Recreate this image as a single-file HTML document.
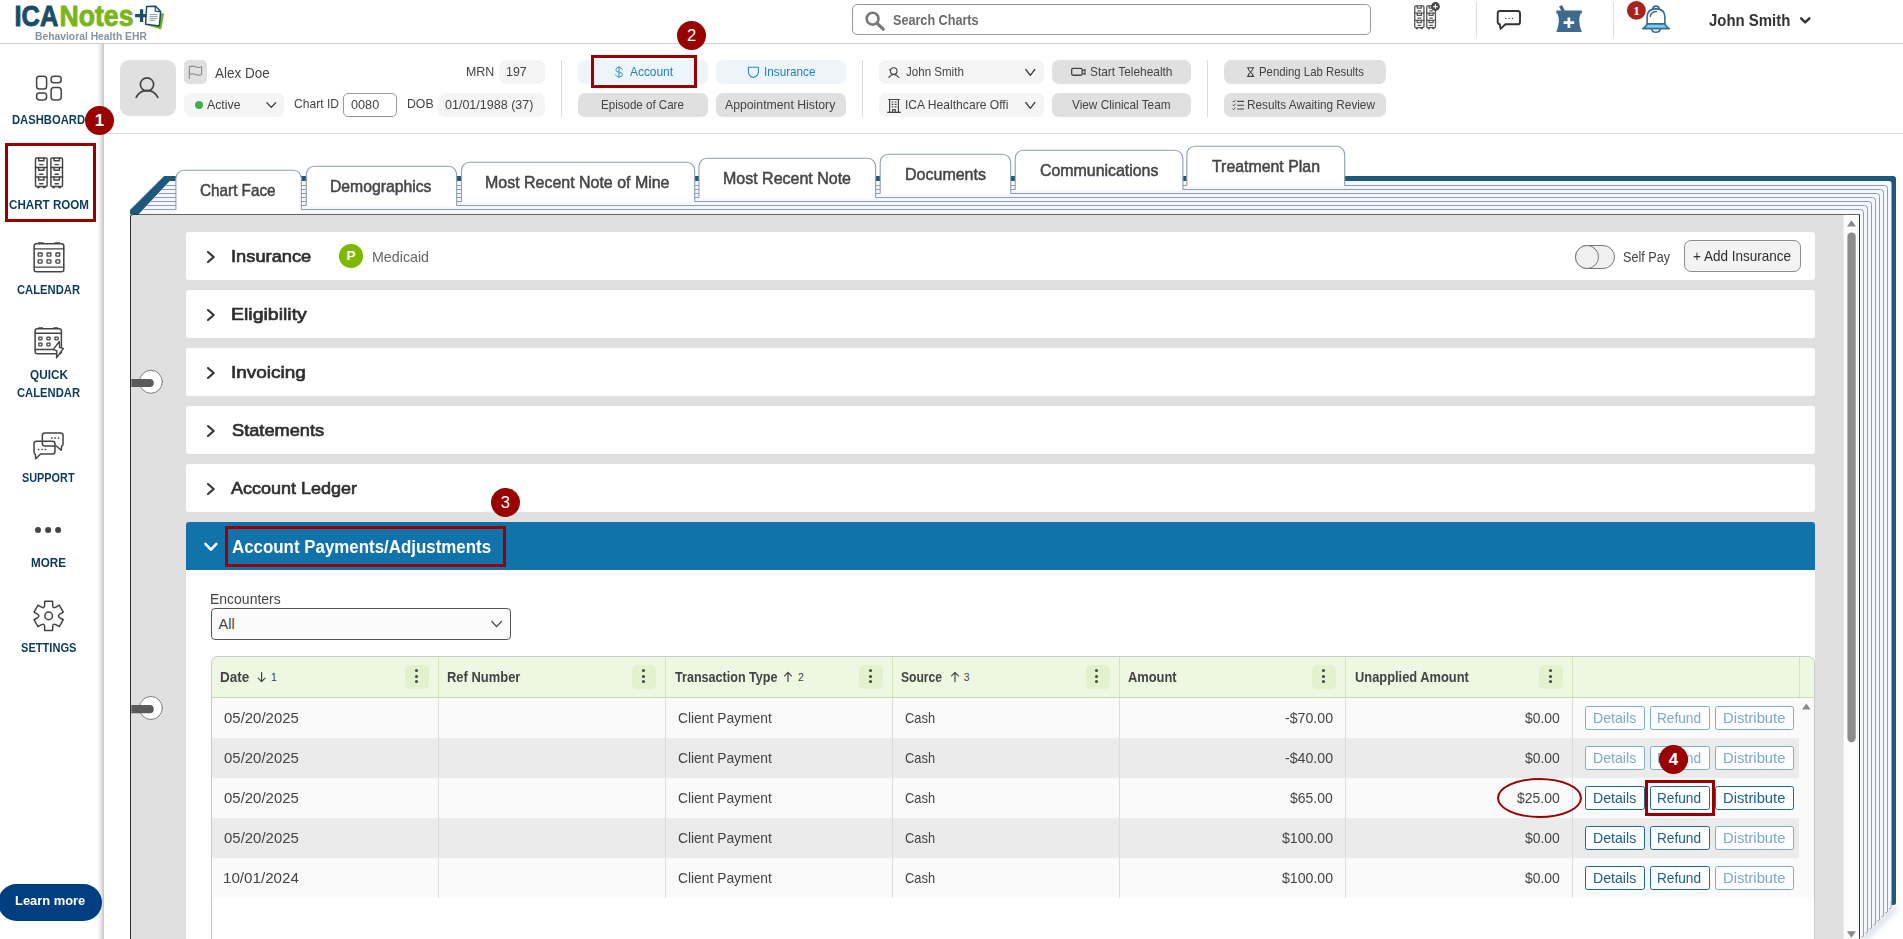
<!DOCTYPE html>
<html lang="en">
<head>
<meta charset="utf-8">
<title>ICANotes - Chart Room</title>
<style>
html,body{margin:0;padding:0;}
html{width:1903px;height:939px;overflow:hidden;}
body{width:1903px;height:939px;overflow:hidden;position:relative;background:#fff;font-family:"Liberation Sans",sans-serif;}
.abs,.t,.box{position:absolute;}
.t{white-space:nowrap;line-height:24px;height:24px;z-index:5;transform-origin:0 50%;}
.box{box-sizing:border-box;}
#header{left:0;top:0;width:1903px;height:44px;background:#fff;border-bottom:1px solid #cfcfcf;}
#sidebar{left:0;top:44px;width:104px;height:895px;background:linear-gradient(90deg,#fff 0,#fff 97px,#f3f3f3 99px,#e2e2e2 101.5px,#c9c9c9 103.6px,#fff 103.7px);}
#pbar{left:104px;top:44px;width:1799px;height:90px;background:#fff;border-bottom:1px solid #dcdcdc;}
.vsep{position:absolute;width:1px;background:#dcdcdc;}
.pill{position:absolute;box-sizing:border-box;border-radius:7px;height:24px;}
.pl{background:#f5f5f5;}
.pg{background:#e0e0e0;}
.pb{background:#edf5fb;}
#content{left:130px;top:214px;width:1730px;height:725px;background:#e0e0e0;border:1px solid #303030;border-bottom:0;border-radius:3px 0 0 0;}
.card{position:absolute;left:186px;width:1629px;height:48px;background:#fff;border-radius:3px;}
#sechead{position:absolute;left:186px;top:522px;width:1629px;height:48px;background:#1273ab;border-radius:3px 3px 0 0;}
#secbody{position:absolute;left:186px;top:570px;width:1629px;height:369px;background:#fff;}
#grid{position:absolute;left:211px;top:656px;width:1604px;height:283px;box-sizing:border-box;border:1px solid #c9c9c9;border-bottom:0;border-radius:7px 7px 0 0;background:#fff;overflow:hidden;}
#ghead{position:absolute;left:0;top:0;width:1604px;height:40px;background:#eef7e2;border-bottom:1px solid #c3dfa4;}
.gsep{position:absolute;top:0;width:1px;height:40px;background:#cfe6b6;}
.rsep{position:absolute;top:41px;width:1px;height:200px;background:#dcdcdc;}
.row{position:absolute;left:0;width:1587px;height:40px;}
.ro{background:#fafafa;}
.re{background:#ebebeb;}
.kebab{position:absolute;top:8px;width:24px;height:24px;border-radius:5px;background:#e1f2cd;}
.kebab i{position:absolute;left:9.6px;width:3px;height:3px;border-radius:50%;background:#444;}
.btn{position:absolute;box-sizing:border-box;height:24px;border:1px solid #1a6a9c;border-radius:2.5px;background:#fff;}
.btn.d{border-color:#82adc7;background:#fcfdfe;}
.badge{position:absolute;width:29.4px;height:29.4px;border-radius:50%;background:#990000;color:#fff;text-align:center;line-height:29.4px;font-size:16.6px;z-index:9;}
.hl{position:absolute;box-sizing:border-box;border:3px solid #990000;z-index:8;}
svg{position:absolute;left:0;top:0;overflow:hidden;}
</style>
</head>
<body>

<!-- ============ top header ============ -->
<div id="header" class="box"></div>
<div class="box" style="left:852px;top:4px;width:519px;height:31px;border:1px solid #9a9a9a;border-radius:5px;background:#fff;"></div>
<div class="vsep" style="left:1476px;top:2px;height:35px;"></div>
<div class="vsep" style="left:1613px;top:2px;height:35px;"></div>

<!-- ============ sidebar ============ -->
<div id="sidebar" class="box"></div>
<div class="box" style="left:-2px;top:883.8px;width:104.2px;height:37.2px;border-radius:18.6px;background:#003e82;z-index:4;"></div>

<!-- ============ patient bar ============ -->
<div id="pbar" class="box"></div>
<div class="box" style="left:120px;top:60px;width:56px;height:56px;border-radius:9px;background:#e0e0e0;"></div>
<div class="box" style="left:184px;top:60px;width:23px;height:24px;border-radius:5px;background:#e0e0e0;"></div>
<div class="pill pl" style="left:184px;top:93px;width:100px;"></div>
<div class="abs" style="left:195px;top:101px;width:8px;height:8px;border-radius:50%;background:#3cb14a;"></div>
<div class="box" style="left:343px;top:93px;width:54px;height:24px;border:1px solid #9a9a9a;border-radius:5px;background:#fff;"></div>
<div class="pill pl" style="left:438px;top:93px;width:107px;"></div>
<div class="pill pl" style="left:499px;top:60px;width:46px;"></div>
<div class="vsep" style="left:561px;top:60px;height:57px;"></div>
<div class="pill pb" style="left:578px;top:60px;width:130px;"></div>
<div class="pill pb" style="left:716px;top:60px;width:130px;"></div>
<div class="pill pg" style="left:578px;top:93px;width:130px;"></div>
<div class="pill pg" style="left:716px;top:93px;width:130px;"></div>
<div class="vsep" style="left:862px;top:60px;height:57px;"></div>
<div class="pill pl" style="left:879px;top:60px;width:165px;"></div>
<div class="pill pl" style="left:879px;top:93px;width:165px;"></div>
<div class="pill pg" style="left:1052px;top:60px;width:139px;"></div>
<div class="pill pg" style="left:1052px;top:93px;width:139px;"></div>
<div class="vsep" style="left:1207px;top:60px;height:57px;"></div>
<div class="pill pg" style="left:1224px;top:60px;width:162px;"></div>
<div class="pill pg" style="left:1224px;top:93px;width:162px;"></div>

<!-- ============ book frame (svg) ============ -->
<svg width="1903" height="939" viewBox="0 0 1903 939" style="z-index:1;pointer-events:none">
<defs><filter id="blr" x="-50%" y="-50%" width="200%" height="200%"><feGaussianBlur stdDeviation="2.6"/></filter></defs>
<path d="M1861,940 L1861,937 L1893,905 L1897,906 L1897,911 L1868,940 Z" fill="#a9b9cf" opacity=".36" filter="url(#blr)"/>
<path d="M138.6,214.2 L169.7,180.9 H1891.5 V906.85 Q1891.5,908.85 1889.5,908.85 H1887.5 V910.90 Q1887.5,912.90 1885.5,912.90 H1883.5 V914.95 Q1883.5,916.95 1881.5,916.95 H1879.5 V919.00 Q1879.5,921.00 1877.5,921.00 H1875.5 V923.05 Q1875.5,925.05 1873.5,925.05 H1871.5 V927.10 Q1871.5,929.10 1869.5,929.10 H1867.5 V931.15 Q1867.5,933.15 1865.5,933.15 H1863.5 V935.20 Q1863.5,937.20 1861.5,937.20 H1860.0 V214.2 Z" fill="#f4f7fc"/>
<path d="M130,216 V209.9 L164.1,176.1 H1893 Q1896,176.1 1896,179.1 V902.4 Q1896,904.9 1893.5,904.9 H1891.5 V183.4 Q1891.5,180.9 1889,180.9 H169.7 L138.6,214.2 H130 Z" fill="#1c597b"/>
<path d="M143.6,209.5 H1860.5 Q1863.5,209.5 1863.5,212.5 V935.20 Q1863.5,937.20 1861.3,937.20" fill="none" stroke="#919eb0" stroke-width="1"/>
<path d="M147.3,205.5 H1864.5 Q1867.5,205.5 1867.5,208.5 V931.15 Q1867.5,933.15 1865.3,933.15" fill="none" stroke="#919eb0" stroke-width="1"/>
<path d="M151.1,201.5 H1868.5 Q1871.5,201.5 1871.5,204.5 V927.10 Q1871.5,929.10 1869.3,929.10" fill="none" stroke="#919eb0" stroke-width="1"/>
<path d="M154.8,197.5 H1872.5 Q1875.5,197.5 1875.5,200.5 V923.05 Q1875.5,925.05 1873.3,925.05" fill="none" stroke="#919eb0" stroke-width="1"/>
<path d="M158.5,193.5 H1876.5 Q1879.5,193.5 1879.5,196.5 V919.00 Q1879.5,921.00 1877.3,921.00" fill="none" stroke="#919eb0" stroke-width="1"/>
<path d="M162.3,189.5 H1880.5 Q1883.5,189.5 1883.5,192.5 V914.95 Q1883.5,916.95 1881.3,916.95" fill="none" stroke="#919eb0" stroke-width="1"/>
<path d="M166.0,185.5 H1884.5 Q1887.5,185.5 1887.5,188.5 V910.90 Q1887.5,912.90 1885.3,912.90" fill="none" stroke="#919eb0" stroke-width="1"/>
<path d="M1891.2,900.85 V906.85 Q1891.2,908.85 1889,908.85" fill="none" stroke="#919eb0" stroke-width=".9"/>
<path d="M175.9,213.9 V178.3 A8,8 0 0 1 183.9,170.3 H293.4 A8,8 0 0 1 301.4,178.3 V213.9 Z" fill="#fff"/>
<path d="M175.9,209.7 V178.3 A8,8 0 0 1 183.9,170.3 H293.4 A8,8 0 0 1 301.4,178.3 V209.7" fill="none" stroke="#919eb0" stroke-width="1.1"/>
<path d="M306.3,206.1 V174.3 A8,8 0 0 1 314.3,166.3 H448.6 A8,8 0 0 1 456.6,174.3 V206.1 Z" fill="#fff"/>
<path d="M306.3,205.7 V174.3 A8,8 0 0 1 314.3,166.3 H448.6 A8,8 0 0 1 456.6,174.3 V205.7" fill="none" stroke="#919eb0" stroke-width="1.1"/>
<path d="M461.5,202.1 V170.3 A8,8 0 0 1 469.5,162.3 H686.7 A8,8 0 0 1 694.7,170.3 V202.1 Z" fill="#fff"/>
<path d="M461.5,201.7 V170.3 A8,8 0 0 1 469.5,162.3 H686.7 A8,8 0 0 1 694.7,170.3 V201.7" fill="none" stroke="#919eb0" stroke-width="1.1"/>
<path d="M699.0,198.1 V166.3 A8,8 0 0 1 707.0,158.3 H867.6 A8,8 0 0 1 875.6,166.3 V198.1 Z" fill="#fff"/>
<path d="M699.0,197.7 V166.3 A8,8 0 0 1 707.0,158.3 H867.6 A8,8 0 0 1 875.6,166.3 V197.7" fill="none" stroke="#919eb0" stroke-width="1.1"/>
<path d="M880.2,194.1 V162.3 A8,8 0 0 1 888.2,154.3 H1002.7 A8,8 0 0 1 1010.7,162.3 V194.1 Z" fill="#fff"/>
<path d="M880.2,193.7 V162.3 A8,8 0 0 1 888.2,154.3 H1002.7 A8,8 0 0 1 1010.7,162.3 V193.7" fill="none" stroke="#919eb0" stroke-width="1.1"/>
<path d="M1015.2,190.1 V158.3 A8,8 0 0 1 1023.2,150.3 H1174.9 A8,8 0 0 1 1182.9,158.3 V190.1 Z" fill="#fff"/>
<path d="M1015.2,189.7 V158.3 A8,8 0 0 1 1023.2,150.3 H1174.9 A8,8 0 0 1 1182.9,158.3 V189.7" fill="none" stroke="#919eb0" stroke-width="1.1"/>
<path d="M1186.8,186.1 V154.3 A8,8 0 0 1 1194.8,146.3 H1336.7 A8,8 0 0 1 1344.7,154.3 V186.1 Z" fill="#fff"/>
<path d="M1186.8,185.7 V154.3 A8,8 0 0 1 1194.8,146.3 H1336.7 A8,8 0 0 1 1344.7,154.3 V185.7" fill="none" stroke="#919eb0" stroke-width="1.1"/>
</svg>

<!-- ============ content panel ============ -->
<div id="content" class="box"></div>
<div class="card" style="top:232px;"></div>
<div class="card" style="top:290px;"></div>
<div class="card" style="top:348px;"></div>
<div class="card" style="top:406px;"></div>
<div class="card" style="top:464px;"></div>
<div id="sechead"></div>
<div id="secbody"></div>

<!-- insurance card widgets -->
<div class="abs" style="left:339.3px;top:244.4px;width:23.5px;height:23.5px;border-radius:50%;background:#7cba01;color:#fff;font-weight:700;font-size:13.5px;line-height:23.5px;text-align:center;">P</div>
<div class="box" style="left:1575px;top:245px;width:40px;height:24px;border:1px solid #777;border-radius:12px;background:#f0f0f0;"></div>
<div class="box" style="left:1575px;top:245px;width:24px;height:24px;border:1px solid #777;border-radius:12px;background:#f0f0f0;"></div>
<div class="box" style="left:1684px;top:240px;width:117px;height:32px;border:1px solid #8c8c8c;border-radius:7px;background:#f3f3f3;"></div>

<!-- encounters select -->
<div class="box" style="left:211px;top:608px;width:300px;height:32px;border:1px solid #555;border-radius:4px;background:#fbfbfb;"></div>

<!-- grid -->
<div id="grid">
  <div id="ghead"></div>
  <div class="gsep" style="left:226px;"></div>
  <div class="gsep" style="left:453px;"></div>
  <div class="gsep" style="left:680px;"></div>
  <div class="gsep" style="left:906.6px;"></div>
  <div class="gsep" style="left:1133.4px;"></div>
  <div class="gsep" style="left:1360.2px;"></div>
  <div class="gsep" style="left:1586.5px;"></div>
  <div class="kebab" style="left:193px;"><i style="top:4.1px"></i><i style="top:9.6px"></i><i style="top:15.1px"></i></div>
  <div class="kebab" style="left:420px;"><i style="top:4.1px"></i><i style="top:9.6px"></i><i style="top:15.1px"></i></div>
  <div class="kebab" style="left:647px;"><i style="top:4.1px"></i><i style="top:9.6px"></i><i style="top:15.1px"></i></div>
  <div class="kebab" style="left:873.7px;"><i style="top:4.1px"></i><i style="top:9.6px"></i><i style="top:15.1px"></i></div>
  <div class="kebab" style="left:1100px;"><i style="top:4.1px"></i><i style="top:9.6px"></i><i style="top:15.1px"></i></div>
  <div class="kebab" style="left:1327px;"><i style="top:4.1px"></i><i style="top:9.6px"></i><i style="top:15.1px"></i></div>
  <div class="row ro" style="top:41px;"></div>
  <div class="row re" style="top:81px;"></div>
  <div class="row ro" style="top:121px;"></div>
  <div class="row re" style="top:161px;"></div>
  <div class="row ro" style="top:201px;"></div>
  <div class="abs" style="left:1587px;top:41px;width:16px;height:200px;background:#fafafa;"></div>
  <div class="rsep" style="left:226px;"></div>
  <div class="rsep" style="left:453px;"></div>
  <div class="rsep" style="left:680px;"></div>
  <div class="rsep" style="left:906.6px;"></div>
  <div class="rsep" style="left:1133.4px;"></div>
  <div class="rsep" style="left:1360.2px;"></div>
</div>
<div class="btn d" style="left:1585px;top:706px;width:60px;"></div>
<div class="btn d" style="left:1650px;top:706px;width:60px;"></div>
<div class="btn d" style="left:1715px;top:706px;width:79px;"></div>
<div class="btn d" style="left:1585px;top:746px;width:60px;"></div>
<div class="btn d" style="left:1650px;top:746px;width:60px;"></div>
<div class="btn d" style="left:1715px;top:746px;width:79px;"></div>
<div class="btn" style="left:1585px;top:786px;width:60px;"></div>
<div class="btn" style="left:1650px;top:786px;width:60px;"></div>
<div class="btn" style="left:1715px;top:786px;width:79px;"></div>
<div class="btn" style="left:1585px;top:826px;width:60px;"></div>
<div class="btn" style="left:1650px;top:826px;width:60px;"></div>
<div class="btn d" style="left:1715px;top:826px;width:79px;"></div>
<div class="btn" style="left:1585px;top:866px;width:60px;"></div>
<div class="btn" style="left:1650px;top:866px;width:60px;"></div>
<div class="btn d" style="left:1715px;top:866px;width:79px;"></div>

<!-- ============ icons (svg) ============ -->
<svg width="1903" height="939" viewBox="0 0 1903 939" style="z-index:3;pointer-events:none" fill="none" stroke-linecap="round" stroke-linejoin="round">
<g stroke="none">
<text x="14.5" y="26.2" font-family="Liberation Sans" font-weight="700" font-size="29.8" fill="#1b4d6b" stroke="#1b4d6b" stroke-width=".9" textLength="43.8" lengthAdjust="spacingAndGlyphs">ICA</text>
<text x="59.5" y="26.2" font-family="Liberation Sans" font-weight="700" font-size="29.8" fill="#7ab51d" stroke="#7ab51d" stroke-width=".9" textLength="74.0" lengthAdjust="spacingAndGlyphs">Notes</text>
<path d="M139.9,9.2h3.3v4.7h4.8v3.3h-4.8v4.8h-3.3v-4.8h-4.8v-3.3h4.8z" fill="#1b4d6b"/>
<path d="M151,12.2 L164.2,13.6 L161.2,29.6 L147.6,25.2 Z" fill="#7ab51d"/>
<path d="M146.6,6.6 L155.6,6.2 L160.6,11.4 L159.4,26 L145.6,24.2 Z" fill="#fff" stroke="#1b4d6b" stroke-width="1.5"/>
<path d="M155.4,6.4 L155.2,11.2 L160.2,11.6" fill="none" stroke="#1b4d6b" stroke-width="1.2"/>
<path d="M149.8,14.6h7.2M149.8,16.6h7.2M149.8,18.6h7.2M149.8,20.4h5" stroke="#7d93b5" stroke-width=".9"/>
</g>
<circle cx="872.6" cy="18.7" r="5.9" stroke="#787878" stroke-width="2.6"/>
<path d="M877.4,23.6 L883.2,29.2" stroke="#787878" stroke-width="3.2"/>
<rect x="35.50" y="157.90" width="11.60" height="28.70" rx="1.1" stroke="#444" stroke-width="1.45"/><path d="M35.50,167.47H47.10" stroke="#444" stroke-width="1.45"/><path d="M35.50,177.03H47.10" stroke="#444" stroke-width="1.45"/><path d="M38.63,157.90V160.77H43.97V157.90" stroke="#444" stroke-width="1.45"/><path d="M39.68,164.60H42.92" stroke="#444" stroke-width="1.45"/><path d="M38.63,167.47V170.34H43.97V167.47" stroke="#444" stroke-width="1.45"/><path d="M39.68,174.16H42.92" stroke="#444" stroke-width="1.45"/><path d="M38.63,177.03V179.90H43.97V177.03" stroke="#444" stroke-width="1.45"/><path d="M39.68,183.73H42.92" stroke="#444" stroke-width="1.45"/><path d="M37.47,187.60h1.62M43.50,187.60h1.62" stroke="#444" stroke-width="1.45"/>
<rect x="50.90" y="157.90" width="11.60" height="28.70" rx="1.1" stroke="#444" stroke-width="1.45"/><path d="M50.90,167.47H62.50" stroke="#444" stroke-width="1.45"/><path d="M50.90,177.03H62.50" stroke="#444" stroke-width="1.45"/><path d="M54.03,157.90V160.77H59.37V157.90" stroke="#444" stroke-width="1.45"/><path d="M55.08,164.60H58.32" stroke="#444" stroke-width="1.45"/><path d="M54.03,167.47V170.34H59.37V167.47" stroke="#444" stroke-width="1.45"/><path d="M55.08,174.16H58.32" stroke="#444" stroke-width="1.45"/><path d="M54.03,177.03V179.90H59.37V177.03" stroke="#444" stroke-width="1.45"/><path d="M55.08,183.73H58.32" stroke="#444" stroke-width="1.45"/><path d="M52.87,187.60h1.62M58.90,187.60h1.62" stroke="#444" stroke-width="1.45"/>
<rect x="1414.75" y="5.85" width="9.20" height="21.80" rx="1.1" stroke="#555" stroke-width="1.3"/><path d="M1414.75,13.12H1423.95" stroke="#555" stroke-width="1.3"/><path d="M1414.75,20.38H1423.95" stroke="#555" stroke-width="1.3"/><path d="M1417.23,5.85V8.03H1421.47V5.85" stroke="#555" stroke-width="1.3"/><path d="M1418.06,10.94H1420.64" stroke="#555" stroke-width="1.3"/><path d="M1417.23,13.12V15.30H1421.47V13.12" stroke="#555" stroke-width="1.3"/><path d="M1418.06,18.20H1420.64" stroke="#555" stroke-width="1.3"/><path d="M1417.23,20.38V22.56H1421.47V20.38" stroke="#555" stroke-width="1.3"/><path d="M1418.06,25.47H1420.64" stroke="#555" stroke-width="1.3"/><path d="M1416.31,28.65h1.29M1421.10,28.65h1.29" stroke="#555" stroke-width="1.3"/>
<rect x="1426.75" y="5.85" width="8.70" height="21.80" rx="1.1" stroke="#555" stroke-width="1.3"/><path d="M1426.75,13.12H1435.45" stroke="#555" stroke-width="1.3"/><path d="M1426.75,20.38H1435.45" stroke="#555" stroke-width="1.3"/><path d="M1429.10,5.85V8.03H1433.10V5.85" stroke="#555" stroke-width="1.3"/><path d="M1429.88,10.94H1432.32" stroke="#555" stroke-width="1.3"/><path d="M1429.10,13.12V15.30H1433.10V13.12" stroke="#555" stroke-width="1.3"/><path d="M1429.88,18.20H1432.32" stroke="#555" stroke-width="1.3"/><path d="M1429.10,20.38V22.56H1433.10V20.38" stroke="#555" stroke-width="1.3"/><path d="M1429.88,25.47H1432.32" stroke="#555" stroke-width="1.3"/><path d="M1428.23,28.65h1.22M1432.75,28.65h1.22" stroke="#555" stroke-width="1.3"/>
<circle cx="1435.45" cy="6.5" r="4.4" fill="#444" stroke="none"/>
<path d="M1433.15,6.5h4.6M1435.45,4.2v4.6" stroke="#fff" stroke-width="1.25" stroke-linecap="butt"/>
<path d="M1500.2,11 H1517.6 Q1520,11 1520,13.4 V21.9 Q1520,24.3 1517.6,24.3 H1505.4 L1500.6,28.9 L1499.8,24.3 Q1497.7,24.1 1497.7,21.9 V13.4 Q1497.7,11 1500.2,11 Z" stroke="#333" stroke-width="1.9"/>
<path d="M1505.9,18.4h.01M1509.2,18.4h.01M1512.5,18.4h.01" stroke="#333" stroke-width="1.3"/>
<path d="M1559.0,6.4 L1562.0,5.0 L1564.8,10.6 H1581.8 V13.6 H1580.6 Q1577.4,21.4 1581.8,32 H1556.3 Q1560.7,21.4 1557.5,13.6 H1556.3 V10.6 H1561.2 Z" fill="#3d6a8e" stroke="none"/>
<path d="M1563.6,22.7h10.6M1568.9,17.4v10.6" stroke="#fff" stroke-width="2.7" stroke-linecap="butt"/>
<path d="M1652.7,8.9 A3.35,3.35 0 0 1 1659.3,8.9" stroke="#3b6a8e" stroke-width="1.6"/>
<path d="M1647.1,23.9 V17.2 Q1647.1,8.9 1656,8.9 Q1664.9,8.9 1664.9,17.2 V23.9 Z" fill="#fff" stroke="#3b6a8e" stroke-width="1.6"/>
<path d="M1647.2,23.9 H1664.8 Q1666.2,27.2 1669.2,28.6 H1642.8 Q1645.8,27.2 1647.2,23.9 Z" fill="#70d0f6" stroke="#3b6a8e" stroke-width="1.6"/>
<path d="M1651.8,29.4 Q1652.3,32.3 1656,32.3 Q1659.7,32.3 1660.2,29.4" stroke="#3b6a8e" stroke-width="1.6"/>
<path d="M1650.3,16.4 Q1650.7,12.2 1656.3,11.6" stroke="#3b6a8e" stroke-width="1.5"/>
<circle cx="1636.4" cy="10.4" r="9.4" fill="#a9211d" stroke="none"/>
<text x="1636.4" y="14.9" font-family="Liberation Serif" font-weight="700" font-size="13" fill="#fff" stroke="none" text-anchor="middle">1</text>
<path d="M1801.1,18.3 L1805.2,22.4 L1809.3,18.3" stroke="#333" stroke-width="2.4"/>
<rect x="36.6" y="76.2" width="10.0" height="12.9" rx="2.8" stroke="#444" stroke-width="1.5"/>
<rect x="51.1" y="76.2" width="10.1" height="6.5" rx="2.8" stroke="#444" stroke-width="1.5"/>
<rect x="36.6" y="93.0" width="10.0" height="6.9" rx="2.8" stroke="#444" stroke-width="1.5"/>
<rect x="51.1" y="87.6" width="10.1" height="12.3" rx="2.8" stroke="#444" stroke-width="1.5"/>
<rect x="34.15" y="243.65" width="29.65" height="28.20" rx="2.3" stroke="#444" stroke-width="1.5"/>
<path d="M34.15,248.9H63.8M34.15,267.1H63.8" stroke="#444" stroke-width="1.4"/>
<path d="M38,243.15H43.6M54.4,243.15H60" stroke="#444" stroke-width="1.6" stroke-linecap="butt"/>
<rect x="38.2" y="253.0" width="3.9" height="3.2" rx=".5" stroke="#444" stroke-width="1.3"/>
<rect x="47.0" y="253.0" width="3.9" height="3.2" rx=".5" stroke="#444" stroke-width="1.3"/>
<rect x="55.9" y="253.0" width="3.9" height="3.2" rx=".5" stroke="#444" stroke-width="1.3"/>
<rect x="38.2" y="259.9" width="3.9" height="3.2" rx=".5" stroke="#444" stroke-width="1.3"/>
<rect x="47.0" y="259.9" width="3.9" height="3.2" rx=".5" stroke="#444" stroke-width="1.3"/>
<rect x="55.9" y="259.9" width="3.9" height="3.2" rx=".5" stroke="#444" stroke-width="1.3"/>
<rect x="35.1" y="328.65" width="26.30" height="25.10" rx="2.3" stroke="#444" stroke-width="1.5"/>
<path d="M35.1,333.2H61.4M35.1,349.5H61.4" stroke="#444" stroke-width="1.4"/>
<path d="M38.2,328.15H43M53.4,328.15H58" stroke="#444" stroke-width="1.6" stroke-linecap="butt"/>
<rect x="38.8" y="337.1" width="3.2" height="2.7" rx=".5" stroke="#444" stroke-width="1.3"/>
<rect x="46.9" y="337.1" width="3.2" height="2.7" rx=".5" stroke="#444" stroke-width="1.3"/>
<rect x="54.9" y="337.1" width="3.2" height="2.7" rx=".5" stroke="#444" stroke-width="1.3"/>
<rect x="38.8" y="343.1" width="3.2" height="2.7" rx=".5" stroke="#444" stroke-width="1.3"/>
<rect x="46.9" y="343.1" width="3.2" height="2.7" rx=".5" stroke="#444" stroke-width="1.3"/>
<path d="M59.3,341.5 L53.4,349.4 L56.9,351.0 L56.5,357.9 L63.4,348.4 L59.6,347.6 Z" fill="#fff" stroke="#444" stroke-width="1.4"/>
<path d="M44.85,432.95 H60.55 Q63.05,432.95 63.05,435.45 V444 Q63.05,445.6 61.6,446.2 L61.2,450.2 L56.4,445.95 H44.85 Q42.35,445.95 42.35,443.45 V435.45 Q42.35,432.95 44.85,432.95 Z" stroke="#444" stroke-width="1.5"/>
<path d="M36.55,441.25 H52.45 Q54.95,441.25 54.95,443.75 V451.55 Q54.95,454.05 52.45,454.05 H40.6 L35.7,458.7 L35.3,454.3 Q34.05,453.6 34.05,452 V443.75 Q34.05,441.25 36.55,441.25 Z" stroke="#444" stroke-width="1.5"/>
<path d="M38.6,449.5h.01M42.0,449.5h.01M45.4,449.5h.01M51.7,438h.01M55.1,438h.01M58.5,438h.01" stroke="#444" stroke-width="1.5" stroke-linecap="square"/>
<circle cx="38.0" cy="530" r="3" fill="#444" stroke="none"/>
<circle cx="48.1" cy="530" r="3" fill="#444" stroke="none"/>
<circle cx="58.1" cy="530" r="3" fill="#444" stroke="none"/>
<path d="M44.65,605.30 L44.65,601.30 L52.65,601.30 L52.65,605.30 Q52.80,608.71 55.83,607.14 L59.29,605.14 L63.29,612.06 L59.83,614.06 Q56.95,615.90 59.83,617.74 L63.29,619.74 L59.29,626.66 L55.83,624.66 Q52.80,623.09 52.65,626.50 L52.65,630.50 L44.65,630.50 L44.65,626.50 Q44.50,623.09 41.47,624.66 L38.01,626.66 L34.01,619.74 L37.47,617.74 Q40.35,615.90 37.47,614.06 L34.01,612.06 L38.01,605.14 L41.47,607.14 Q44.50,608.71 44.65,605.30 Z" stroke="#444" stroke-width="1.5"/>
<circle cx="48.65" cy="615.9" r="3.8" stroke="#444" stroke-width="1.5"/>
<circle cx="147" cy="84.4" r="6.6" stroke="#444" stroke-width="1.7"/>
<path d="M136.2,97.4 Q139.6,90.3 147,90.3 Q154.4,90.3 157.8,97.4" stroke="#444" stroke-width="1.7"/>
<path d="M189.4,66.2 V78.4 M189.4,66.8 Q192.4,65.4 195.4,66.8 T201.6,66.8 V74.4 Q198.6,75.8 195.4,74.4 T189.4,74.4" stroke="#8a8a8a" stroke-width="1.1"/>
<path d="M266.9,102.8 L271.29999999999995,107.4 L275.7,102.8" stroke="#3a3a3a" stroke-width="1.25"/>
<path d="M1025.8,69.5 L1030.3,75.3 L1034.8,69.5" stroke="#3a3a3a" stroke-width="1.25"/>
<path d="M1025.8,102.5 L1030.3,108.3 L1034.8,102.5" stroke="#3a3a3a" stroke-width="1.25"/>
<path d="M491.8,621.4 L496.6,626.6 L501.4,621.4" stroke="#3a3a3a" stroke-width="1.25"/>
<path d="M622.4,69.4 Q621.4,67.4 619,67.4 Q615.8,67.4 615.8,69.8 Q615.8,71.6 619,72.1 Q622.5,72.6 622.5,74.6 Q622.5,76.9 619,76.9 Q616.4,76.9 615.4,74.8 M619,66.4 V77.8" stroke="#3f96c4" stroke-width="1.0"/>
<path d="M748.4,67.2 H758.4 V72 Q758.4,75.6 753.4,77.6 Q748.4,75.6 748.4,72 Z" stroke="#2a86b9" stroke-width="1.1"/>
<circle cx="893.7" cy="71.1" r="3.3" stroke="#444" stroke-width="1.15"/>
<path d="M888.8,77.4 Q890.8,74.5 893.7,74.5 Q896.6,74.5 898.9,77.4" stroke="#444" stroke-width="1.15"/>
<circle cx="889.8" cy="69.8" r=".8" fill="#444" stroke="none"/>
<path d="M889.6,112.3 V99.5 M898.4,112.3 V99.5 M888.2,99.5 H899.8 M887.2,112.3 H900.8 M892.6,112.3 V109.6 H895.3 V112.3" stroke="#444" stroke-width="1.2" stroke-linecap="butt"/>
<path d="M891.6,102h1.8M894.7,102h1.8M891.6,104.4h1.8M894.7,104.4h1.8M891.6,106.9h1.8M894.7,106.9h1.8" stroke="#444" stroke-width="1.1" stroke-linecap="butt"/>
<rect x="1071.65" y="68.35" width="10.5" height="6.9" rx="1.4" stroke="#444" stroke-width="1.3"/>
<path d="M1082.6,70.7 L1085.0,69.5 V74.5 L1082.6,73.3" stroke="#444" stroke-width="1.2"/>
<path d="M1247.4,67.8 H1253.8 M1247.4,76.4 H1253.8 M1248.2,67.8 Q1248.2,70.6 1250.6,72.1 Q1253,70.6 1253,67.8 M1248.2,76.4 Q1248.2,73.6 1250.6,72.1 Q1253,73.6 1253,76.4" stroke="#444" stroke-width="1.1"/>
<path d="M1237.6,101.4 H1243.6 M1237.6,105.2 H1243.6 M1237.6,109 H1243.6" stroke="#444" stroke-width="1.1"/>
<path d="M1232.8,101.2 l.9,.9 l1.6,-1.9 M1232.8,105 l.9,.9 l1.6,-1.9 M1232.8,108.8 l.9,.9 l1.6,-1.9" stroke="#444" stroke-width=".9"/>
<path d="M208.0,252.0 L213.7,257.0 L208.0,262.0" stroke="#333" stroke-width="2.1"/>
<path d="M208.0,310.0 L213.7,315.0 L208.0,320.0" stroke="#333" stroke-width="2.1"/>
<path d="M208.0,368.0 L213.7,373.0 L208.0,378.0" stroke="#333" stroke-width="2.1"/>
<path d="M208.0,426.0 L213.7,431.0 L208.0,436.0" stroke="#333" stroke-width="2.1"/>
<path d="M208.0,484.0 L213.7,489.0 L208.0,494.0" stroke="#333" stroke-width="2.1"/>
<path d="M205.4,543.8 L210.9,549.6 L216.4,543.8" stroke="#fff" stroke-width="2.5"/>
<path d="M261.6,672.4V681.6M258.20000000000005,678.2L261.6,681.6L265.0,678.2" stroke="#444" stroke-width="1.2"/>
<path d="M788.0,681.6V672.4M784.6,675.8L788.0,672.4L791.4,675.8" stroke="#444" stroke-width="1.2"/>
<path d="M955.0,681.6V672.4M951.6,675.8L955.0,672.4L958.4,675.8" stroke="#444" stroke-width="1.2"/>
<rect x="1843.6" y="215" width="15.4" height="724" fill="#fcfcfc" stroke="none"/>
<path d="M1851.5,220.2 L1856,226.6 H1847 Z" fill="#8a8a8a" stroke="none"/>
<rect x="1847.4" y="232.4" width="8.3" height="509.8" rx="4.15" fill="#8c8c8c" stroke="none"/>
<path d="M1851.45,937.8 L1855.9,931.2 H1847 Z" fill="#8a8a8a" stroke="none"/>
<path d="M1806.3,703.6 L1810.6,709.4 H1802 Z" fill="#8a8a8a" stroke="none"/>
<circle cx="150.9" cy="381.8" r="11.5" fill="#fff" stroke="#7c7c7c" stroke-width="1"/>
<path d="M131.3,378.9 H149.7 A4.05,4.05 0 0 1 149.7,387.0 H131.3 Z" fill="#5a5a5a" stroke="none"/>
<circle cx="150.9" cy="708.0" r="11.5" fill="#fff" stroke="#7c7c7c" stroke-width="1"/>
<path d="M131.3,705.1 H149.7 A4.05,4.05 0 0 1 149.7,713.1999999999999 H131.3 Z" fill="#5a5a5a" stroke="none"/>
</svg>

<!-- ============ text ============ -->
<div class="t" style="left:892.70px;top:7.77px;font-size:15px;color:#6b6b6b;transform:scaleX(0.8415);font-weight:700;">Search Charts</div>
<div class="t" style="left:1709.10px;top:8.19px;font-size:16.5px;color:#333;transform:scaleX(0.9058);font-weight:700;">John Smith</div>
<div class="t" style="left:34.50px;top:23.73px;font-size:11.5px;color:#8694a2;transform:scaleX(0.8977);font-weight:700;">Behavioral Health EHR</div>
<div class="t" style="left:11.80px;top:107.84px;font-size:12.6px;color:#0b3a5a;transform:scaleX(0.8916);font-weight:700;">DASHBOARD</div>
<div class="t" style="left:8.70px;top:192.84px;font-size:12.6px;color:#0b3a5a;transform:scaleX(0.9228);font-weight:700;">CHART ROOM</div>
<div class="t" style="left:17.20px;top:278.14px;font-size:12.6px;color:#0b3a5a;transform:scaleX(0.8914);font-weight:700;">CALENDAR</div>
<div class="t" style="left:29.70px;top:363.14px;font-size:12.6px;color:#0b3a5a;transform:scaleX(0.9337);font-weight:700;">QUICK</div>
<div class="t" style="left:17.20px;top:380.64px;font-size:12.6px;color:#0b3a5a;transform:scaleX(0.8914);font-weight:700;">CALENDAR</div>
<div class="t" style="left:21.80px;top:465.84px;font-size:12.6px;color:#0b3a5a;transform:scaleX(0.8630);font-weight:700;">SUPPORT</div>
<div class="t" style="left:31.20px;top:550.94px;font-size:12.6px;color:#0b3a5a;transform:scaleX(0.9256);font-weight:700;">MORE</div>
<div class="t" style="left:21.30px;top:636.14px;font-size:12.6px;color:#0b3a5a;transform:scaleX(0.8805);font-weight:700;">SETTINGS</div>
<div class="t" style="left:15.35px;top:889.11px;font-size:13.5px;color:#fff;transform:scaleX(0.9559);font-weight:700;">Learn more</div>
<div class="t" style="left:215.20px;top:61.36px;font-size:14px;color:#444;transform:scaleX(0.9628);">Alex Doe</div>
<div class="t" style="left:207.10px;top:92.95px;font-size:13px;color:#444;transform:scaleX(0.9468);">Active</div>
<div class="t" style="left:294.40px;top:92.15px;font-size:13px;color:#444;transform:scaleX(0.9289);">Chart ID</div>
<div class="t" style="left:351.00px;top:92.95px;font-size:13px;color:#444;transform:scaleX(0.9760);">0080</div>
<div class="t" style="left:407.06px;top:92.15px;font-size:13px;color:#444;transform:scaleX(0.9434);">DOB</div>
<div class="t" style="left:444.50px;top:92.95px;font-size:13px;color:#444;transform:scaleX(0.9632);">01/01/1988 (37)</div>
<div class="t" style="left:466.24px;top:59.85px;font-size:13px;color:#444;transform:scaleX(0.9569);">MRN</div>
<div class="t" style="left:506.00px;top:59.85px;font-size:13px;color:#444;transform:scaleX(0.9553);">197</div>
<div class="t" style="left:629.90px;top:59.75px;font-size:13px;color:#1f7fb5;transform:scaleX(0.9164);">Account</div>
<div class="t" style="left:763.70px;top:59.75px;font-size:13px;color:#1f7fb5;transform:scaleX(0.9022);">Insurance</div>
<div class="t" style="left:600.81px;top:92.95px;font-size:13px;color:#444;transform:scaleX(0.8892);">Episode of Care</div>
<div class="t" style="left:725.10px;top:92.95px;font-size:13px;color:#444;transform:scaleX(0.9426);">Appointment History</div>
<div class="t" style="left:906.00px;top:59.75px;font-size:13px;color:#444;transform:scaleX(0.8889);">John Smith</div>
<div class="t" style="left:905.07px;top:92.95px;font-size:13px;color:#444;transform:scaleX(0.9309);">ICA Healthcare Offi</div>
<div class="t" style="left:1089.70px;top:59.75px;font-size:13px;color:#444;transform:scaleX(0.9156);">Start Telehealth</div>
<div class="t" style="left:1072.00px;top:92.95px;font-size:13px;color:#444;transform:scaleX(0.9072);">View Clinical Team</div>
<div class="t" style="left:1259.03px;top:59.75px;font-size:13px;color:#444;transform:scaleX(0.8739);">Pending Lab Results</div>
<div class="t" style="left:1246.90px;top:92.95px;font-size:13px;color:#444;transform:scaleX(0.9047);">Results Awaiting Review</div>
<div class="t" style="left:200.40px;top:178.39px;font-size:16.2px;color:#454545;transform:scaleX(0.9442);-webkit-text-stroke:0.5px #454545;">Chart Face</div>
<div class="t" style="left:330.03px;top:174.39px;font-size:16.2px;color:#454545;transform:scaleX(0.9722);-webkit-text-stroke:0.5px #454545;">Demographics</div>
<div class="t" style="left:485.01px;top:170.39px;font-size:16.2px;color:#454545;transform:scaleX(0.9859);-webkit-text-stroke:0.5px #454545;">Most Recent Note of Mine</div>
<div class="t" style="left:723.01px;top:166.39px;font-size:16.2px;color:#454545;transform:scaleX(0.9879);-webkit-text-stroke:0.5px #454545;">Most Recent Note</div>
<div class="t" style="left:904.51px;top:162.39px;font-size:16.2px;color:#454545;transform:scaleX(0.9891);-webkit-text-stroke:0.5px #454545;">Documents</div>
<div class="t" style="left:1039.60px;top:158.39px;font-size:16.2px;color:#454545;transform:scaleX(0.9821);-webkit-text-stroke:0.5px #454545;">Communications</div>
<div class="t" style="left:1212.40px;top:154.39px;font-size:16.2px;color:#454545;transform:scaleX(0.9811);-webkit-text-stroke:0.5px #454545;">Treatment Plan</div>
<div class="t" style="left:230.92px;top:245.40px;font-size:17px;color:#2e2e2e;transform:scaleX(1.0751);-webkit-text-stroke:0.65px #2e2e2e;">Insurance</div>
<div class="t" style="left:372.32px;top:245.17px;font-size:14.5px;color:#666;transform:scaleX(0.9831);">Medicaid</div>
<div class="t" style="left:231.25px;top:303.40px;font-size:17px;color:#2e2e2e;transform:scaleX(1.1473);-webkit-text-stroke:0.65px #2e2e2e;">Eligibility</div>
<div class="t" style="left:230.88px;top:361.40px;font-size:17px;color:#2e2e2e;transform:scaleX(1.1152);-webkit-text-stroke:0.65px #2e2e2e;">Invoicing</div>
<div class="t" style="left:232.00px;top:419.40px;font-size:17px;color:#2e2e2e;transform:scaleX(1.0715);-webkit-text-stroke:0.65px #2e2e2e;">Statements</div>
<div class="t" style="left:231.30px;top:477.40px;font-size:17px;color:#2e2e2e;transform:scaleX(1.0576);-webkit-text-stroke:0.65px #2e2e2e;">Account Ledger</div>
<div class="t" style="left:231.70px;top:535.01px;font-size:18px;color:#fff;transform:scaleX(0.9383);font-weight:700;">Account Payments/Adjustments</div>
<div class="t" style="left:1622.80px;top:245.16px;font-size:14px;color:#444;transform:scaleX(0.9053);">Self Pay</div>
<div class="t" style="left:1693.40px;top:244.17px;font-size:14.5px;color:#2e2e2e;transform:scaleX(0.9307);">+ Add Insurance</div>
<div class="t" style="left:209.82px;top:586.76px;font-size:14.3px;color:#444;transform:scaleX(0.9779);">Encounters</div>
<div class="t" style="left:218.60px;top:612.17px;font-size:14.5px;color:#444;">All</div>
<div class="t" style="left:219.80px;top:665.17px;font-size:14.5px;color:#444;transform:scaleX(0.9310);font-weight:700;">Date</div>
<div class="t" style="left:447.30px;top:665.17px;font-size:14.5px;color:#444;transform:scaleX(0.8929);font-weight:700;">Ref Number</div>
<div class="t" style="left:674.50px;top:665.17px;font-size:14.5px;color:#444;transform:scaleX(0.8678);font-weight:700;">Transaction Type</div>
<div class="t" style="left:901.00px;top:665.17px;font-size:14.5px;color:#444;transform:scaleX(0.8352);font-weight:700;">Source</div>
<div class="t" style="left:1128.00px;top:665.17px;font-size:14.5px;color:#444;transform:scaleX(0.8883);font-weight:700;">Amount</div>
<div class="t" style="left:1354.50px;top:665.17px;font-size:14.5px;color:#444;transform:scaleX(0.8873);font-weight:700;">Unapplied Amount</div>
<div class="t" style="left:270.90px;top:665.12px;font-size:10.5px;color:#444;">1</div>
<div class="t" style="left:798.00px;top:665.12px;font-size:10.5px;color:#444;">2</div>
<div class="t" style="left:963.70px;top:665.12px;font-size:10.5px;color:#444;">3</div>
<div class="t" style="left:223.60px;top:706.17px;font-size:14.5px;color:#444;transform:scaleX(1.0316);">05/20/2025</div>
<div class="t" style="left:678.00px;top:706.17px;font-size:14.5px;color:#444;transform:scaleX(0.9533);">Client Payment</div>
<div class="t" style="left:905.00px;top:706.17px;font-size:14.5px;color:#444;transform:scaleX(0.8880);">Cash</div>
<div class="t" style="left:1285.00px;top:706.17px;font-size:14.5px;color:#444;transform:scaleX(0.9773);">-$70.00</div>
<div class="t" style="left:1524.80px;top:706.17px;font-size:14.5px;color:#444;transform:scaleX(0.9608);">$0.00</div>
<div class="t" style="left:1593.02px;top:706.17px;font-size:14.5px;color:#7fa9c4;transform:scaleX(0.9751);">Details</div>
<div class="t" style="left:1657.46px;top:706.17px;font-size:14.5px;color:#7fa9c4;transform:scaleX(0.9411);">Refund</div>
<div class="t" style="left:1722.68px;top:706.17px;font-size:14.5px;color:#7fa9c4;transform:scaleX(1.0186);">Distribute</div>
<div class="t" style="left:223.60px;top:746.17px;font-size:14.5px;color:#444;transform:scaleX(1.0316);">05/20/2025</div>
<div class="t" style="left:678.00px;top:746.17px;font-size:14.5px;color:#444;transform:scaleX(0.9533);">Client Payment</div>
<div class="t" style="left:905.00px;top:746.17px;font-size:14.5px;color:#444;transform:scaleX(0.8880);">Cash</div>
<div class="t" style="left:1285.00px;top:746.17px;font-size:14.5px;color:#444;transform:scaleX(0.9773);">-$40.00</div>
<div class="t" style="left:1524.80px;top:746.17px;font-size:14.5px;color:#444;transform:scaleX(0.9608);">$0.00</div>
<div class="t" style="left:1593.02px;top:746.17px;font-size:14.5px;color:#7fa9c4;transform:scaleX(0.9751);">Details</div>
<div class="t" style="left:1657.46px;top:746.17px;font-size:14.5px;color:#7fa9c4;transform:scaleX(0.9411);">Refund</div>
<div class="t" style="left:1722.68px;top:746.17px;font-size:14.5px;color:#7fa9c4;transform:scaleX(1.0186);">Distribute</div>
<div class="t" style="left:223.60px;top:786.17px;font-size:14.5px;color:#444;transform:scaleX(1.0316);">05/20/2025</div>
<div class="t" style="left:678.00px;top:786.17px;font-size:14.5px;color:#444;transform:scaleX(0.9533);">Client Payment</div>
<div class="t" style="left:905.00px;top:786.17px;font-size:14.5px;color:#444;transform:scaleX(0.8880);">Cash</div>
<div class="t" style="left:1290.40px;top:786.17px;font-size:14.5px;color:#444;transform:scaleX(0.9619);">$65.00</div>
<div class="t" style="left:1516.90px;top:786.17px;font-size:14.5px;color:#444;transform:scaleX(0.9642);">$25.00</div>
<div class="t" style="left:1593.02px;top:786.17px;font-size:14.5px;color:#1a5f8c;transform:scaleX(0.9751);">Details</div>
<div class="t" style="left:1657.46px;top:786.17px;font-size:14.5px;color:#1a5f8c;transform:scaleX(0.9411);">Refund</div>
<div class="t" style="left:1722.68px;top:786.17px;font-size:14.5px;color:#1a5f8c;transform:scaleX(1.0186);">Distribute</div>
<div class="t" style="left:223.60px;top:826.17px;font-size:14.5px;color:#444;transform:scaleX(1.0316);">05/20/2025</div>
<div class="t" style="left:678.00px;top:826.17px;font-size:14.5px;color:#444;transform:scaleX(0.9533);">Client Payment</div>
<div class="t" style="left:905.00px;top:826.17px;font-size:14.5px;color:#444;transform:scaleX(0.8880);">Cash</div>
<div class="t" style="left:1282.00px;top:826.17px;font-size:14.5px;color:#444;transform:scaleX(0.9742);">$100.00</div>
<div class="t" style="left:1524.80px;top:826.17px;font-size:14.5px;color:#444;transform:scaleX(0.9608);">$0.00</div>
<div class="t" style="left:1593.02px;top:826.17px;font-size:14.5px;color:#1a5f8c;transform:scaleX(0.9751);">Details</div>
<div class="t" style="left:1657.46px;top:826.17px;font-size:14.5px;color:#1a5f8c;transform:scaleX(0.9411);">Refund</div>
<div class="t" style="left:1722.68px;top:826.17px;font-size:14.5px;color:#7fa9c4;transform:scaleX(1.0186);">Distribute</div>
<div class="t" style="left:222.55px;top:866.17px;font-size:14.5px;color:#444;transform:scaleX(1.0461);">10/01/2024</div>
<div class="t" style="left:678.00px;top:866.17px;font-size:14.5px;color:#444;transform:scaleX(0.9533);">Client Payment</div>
<div class="t" style="left:905.00px;top:866.17px;font-size:14.5px;color:#444;transform:scaleX(0.8880);">Cash</div>
<div class="t" style="left:1282.00px;top:866.17px;font-size:14.5px;color:#444;transform:scaleX(0.9742);">$100.00</div>
<div class="t" style="left:1524.80px;top:866.17px;font-size:14.5px;color:#444;transform:scaleX(0.9608);">$0.00</div>
<div class="t" style="left:1593.02px;top:866.17px;font-size:14.5px;color:#1a5f8c;transform:scaleX(0.9751);">Details</div>
<div class="t" style="left:1657.46px;top:866.17px;font-size:14.5px;color:#1a5f8c;transform:scaleX(0.9411);">Refund</div>
<div class="t" style="left:1722.68px;top:866.17px;font-size:14.5px;color:#7fa9c4;transform:scaleX(1.0186);">Distribute</div>

<!-- ============ tutorial annotations ============ -->
<div class="hl" style="left:5px;top:143px;width:91px;height:79px;"></div>
<div class="hl" style="left:591px;top:55px;width:106px;height:33px;"></div>
<div class="hl" style="left:225px;top:526px;width:281px;height:41px;"></div>
<div class="hl" style="left:1645px;top:780px;width:70px;height:36px;"></div>
<div class="abs" style="left:1497px;top:778px;width:85px;height:40px;box-sizing:border-box;border:2.8px solid #990000;border-radius:50%;z-index:8;"></div>
<div class="badge" style="left:84.8px;top:105.7px;font-weight:700;font-size:17px;">1</div>
<div class="badge" style="left:676.9px;top:20.8px;">2</div>
<div class="badge" style="left:490.6px;top:487.6px;">3</div>
<div class="badge" style="left:1658.7px;top:744.6px;font-weight:700;font-size:17px;">4</div>

</body>
</html>
